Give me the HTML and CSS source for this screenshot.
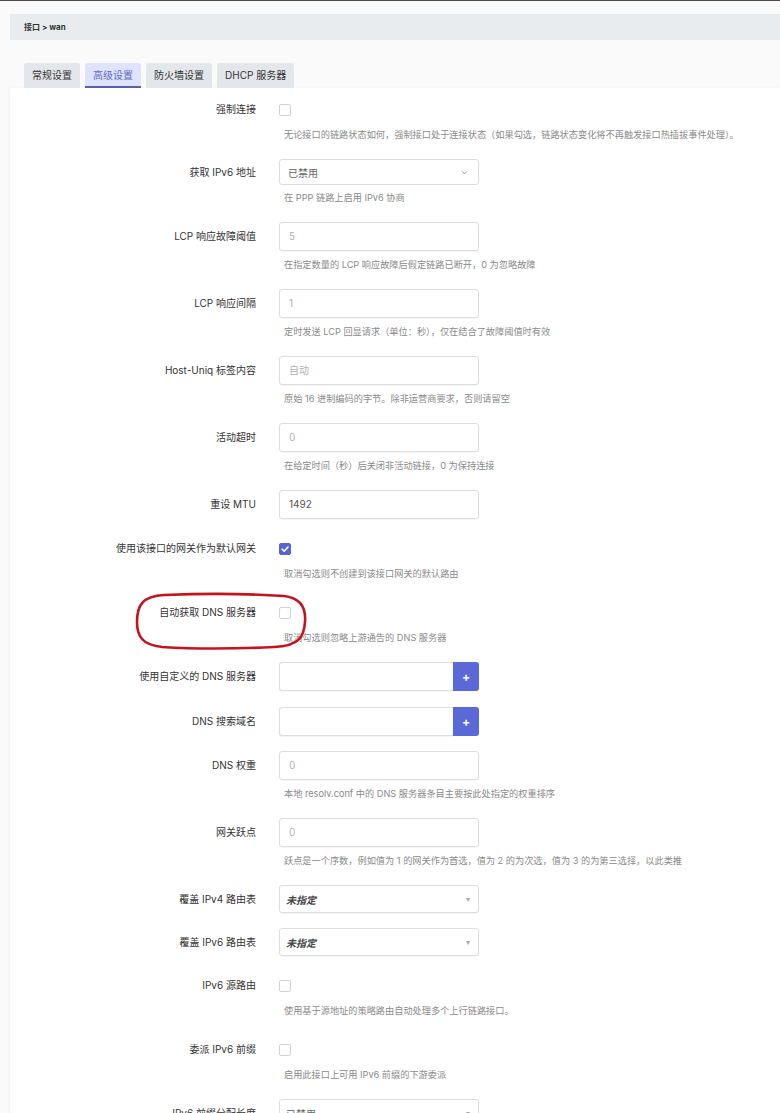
FILE: index.html
```html
<!DOCTYPE html>
<html lang="zh-CN">
<head>
<meta charset="utf-8">
<title>接口 » wan</title>
<link rel="stylesheet" href="styles.css">
</head>
<body>
<div class="topline"></div>
<div class="page">
  <div class="breadcrumb">接口 &gt; wan</div>
  <ul class="tabs">
    <li class="tab">常规设置</li>
    <li class="tab active">高级设置</li>
    <li class="tab">防火墙设置</li>
    <li class="tab">DHCP 服务器</li>
  </ul>
  <div class="card">
    <div class="row">
      <div class="lbl">强制连接</div>
      <div class="field">
        <div class="ctl"><span class="cb"></span></div>
        <div class="help cbhelp">无论接口的链路状态如何，强制接口处于连接状态（如果勾选，链路状态变化将不再触发接口热插拔事件处理）。</div>
      </div>
    </div>

    <div class="row">
      <div class="lbl sel">获取 IPv6 地址</div>
      <div class="field">
        <div class="select"><span class="val">已禁用</span>
          <svg class="chev" viewBox="0 0 8 5" width="7" height="5"><path d="M1 1l3 3 3-3" fill="none" stroke="#888" stroke-width="1"/></svg>
        </div>
        <div class="help selhelp">在 PPP 链路上启用 IPv6 协商</div>
      </div>
    </div>

    <div class="row">
      <div class="lbl">LCP 响应故障阈值</div>
      <div class="field">
        <div class="input ph">5</div>
        <div class="help">在指定数量的 LCP 响应故障后假定链路已断开，0 为忽略故障</div>
      </div>
    </div>

    <div class="row">
      <div class="lbl">LCP 响应间隔</div>
      <div class="field">
        <div class="input ph">1</div>
        <div class="help">定时发送 LCP 回显请求（单位：秒），仅在结合了故障阈值时有效</div>
      </div>
    </div>

    <div class="row">
      <div class="lbl">Host-Uniq 标签内容</div>
      <div class="field">
        <div class="input ph">自动</div>
        <div class="help">原始 16 进制编码的字节。除非运营商要求，否则请留空</div>
      </div>
    </div>

    <div class="row">
      <div class="lbl">活动超时</div>
      <div class="field">
        <div class="input ph">0</div>
        <div class="help">在给定时间（秒）后关闭非活动链接，0 为保持连接</div>
      </div>
    </div>

    <div class="row tight">
      <div class="lbl">重设 MTU</div>
      <div class="field">
        <div class="input">1492</div>
      </div>
    </div>

    <div class="row">
      <div class="lbl">使用该接口的网关作为默认网关</div>
      <div class="field">
        <div class="ctl"><span class="cb checked"><svg viewBox="0 0 12 12" width="12" height="12"><path d="M3.2 6.2l2 2 3.8-4.2" fill="none" stroke="#fff" stroke-width="1.6" stroke-linecap="round" stroke-linejoin="round"/></svg></span></div>
        <div class="help cbhelp">取消勾选则不创建到该接口网关的默认路由</div>
      </div>
    </div>

    <div class="row">
      <div class="lbl">自动获取 DNS 服务器</div>
      <div class="field">
        <div class="ctl"><span class="cb"></span></div>
        <div class="help cbhelp">取消勾选则忽略上游通告的 DNS 服务器</div>
      </div>
    </div>

    <div class="row dyn">
      <div class="lbl">使用自定义的 DNS 服务器</div>
      <div class="field">
        <div class="dynlist"><span class="dyninput"></span><span class="plus">+</span></div>
      </div>
    </div>

    <div class="row tight">
      <div class="lbl">DNS 搜索域名</div>
      <div class="field">
        <div class="dynlist"><span class="dyninput"></span><span class="plus">+</span></div>
      </div>
    </div>

    <div class="row">
      <div class="lbl">DNS 权重</div>
      <div class="field">
        <div class="input ph">0</div>
        <div class="help">本地 resolv.conf 中的 DNS 服务器条目主要按此处指定的权重排序</div>
      </div>
    </div>

    <div class="row">
      <div class="lbl">网关跃点</div>
      <div class="field">
        <div class="input ph">0</div>
        <div class="help">跃点是一个序数，例如值为 1 的网关作为首选，值为 2 的为次选，值为 3 的为第三选择，以此类推</div>
      </div>
    </div>

    <div class="row tight">
      <div class="lbl dd">覆盖 IPv4 路由表</div>
      <div class="field">
        <div class="dropdown"><em>未指定</em><span class="tri">▾</span></div>
      </div>
    </div>

    <div class="row tight">
      <div class="lbl dd">覆盖 IPv6 路由表</div>
      <div class="field">
        <div class="dropdown"><em>未指定</em><span class="tri">▾</span></div>
      </div>
    </div>

    <div class="row">
      <div class="lbl">IPv6 源路由</div>
      <div class="field">
        <div class="ctl"><span class="cb"></span></div>
        <div class="help cbhelp">使用基于源地址的策略路由自动处理多个上行链路接口。</div>
      </div>
    </div>

    <div class="row">
      <div class="lbl">委派 IPv6 前缀</div>
      <div class="field">
        <div class="ctl"><span class="cb"></span></div>
        <div class="help cbhelp">启用此接口上可用 IPv6 前缀的下游委派</div>
      </div>
    </div>

    <div class="row">
      <div class="lbl dd">IPv6 前缀分配长度</div>
      <div class="field">
        <div class="dropdown"><span class="val">已禁用</span><span class="tri">▾</span></div>
        <div class="help">向下游分配给定长度的委派前缀</div>
      </div>
    </div>
  </div>

  <svg class="annot" viewBox="0 0 174 58" width="174" height="58">
    <path d="M30 3 C 80 1, 120 2, 150 4 C 168 6, 172 18, 171 30 C 170 44, 166 54, 140 55 C 100 57, 60 57, 28 55 C 8 53, 3 44, 3 30 C 3 14, 8 4, 30 3 Z" fill="none" stroke="#c3141d" stroke-width="2.6"/>
  </svg>
</div>
</body>
</html>
```

FILE: styles.css
```css
* { box-sizing: border-box; }
html, body { margin: 0; padding: 0; }
body {
  background: #fafafb;
  font-family: Inter, "Noto Sans CJK SC", sans-serif;
  color: #333;
  overflow: hidden;
}
.topline { height: 1px; background: #4a4a4a; }
.page { position: relative; }

.breadcrumb {
  margin: 13px 0 0 10px;
  height: 26px;
  line-height: 26px;
  padding-left: 14px;
  background: #e9ecef;
  font-size: 8px;
  font-weight: 700;
  color: #333;
}

.tabs {
  list-style: none;
  margin: 23px 0 0 0;
  padding: 0 0 0 24px;
  display: flex;
  gap: 5px;
  height: 25px;
}
.tab {
  height: 25px;
  line-height: 25px;
  padding: 0 8px;
  background: #e3e6ea;
  border-radius: 3px 3px 0 0;
  font-size: 10px;
  color: #333;
}
.tab.active {
  background: #dfe3fb;
  color: #5d69c9;
  border-bottom: 2px solid #5a62a6;
  line-height: 24px;
}

.card {
  margin-left: 10px;
  background: #fff;
  padding-top: 7px;
  box-shadow: -1px 0 3px rgba(0,0,0,0.04);
  min-height: 1100px;
}

.row {
  display: grid;
  grid-template-columns: 246px 200px;
  column-gap: 23px;
  margin-bottom: 17px;
  align-items: start;
}
.row.tight { margin-bottom: 15px; }
.row.dyn { margin-bottom: 16px; }

.lbl {
  text-align: right;
  font-size: 10px;
  color: #333;
  height: 29px;
  line-height: 29px;
  white-space: nowrap;
}
.lbl.sel { height: 26px; line-height: 26px; }
.lbl.dd { height: 28px; line-height: 28px; }

.field { display: flex; flex-direction: column; }

.ctl { height: 29px; display: flex; align-items: center; }

.cb {
  width: 12px;
  height: 12px;
  border: 1px solid #cfd2d6;
  border-radius: 2px;
  background: #fff;
  display: block;
}
.cb.checked {
  background: #5865cf;
  border-color: #5865cf;
  position: relative;
}
.cb.checked svg { position: absolute; left: -1px; top: -1px; }

.help {
  margin-top: 7px;
  margin-left: 5px;
  font-size: 9.2px;
  line-height: 14px;
  color: #8a8a8a;
  white-space: nowrap;
}
.help.cbhelp { margin-top: 4px; }
.help.selhelp { margin-top: 6px; }

.input {
  height: 29px;
  border: 1px solid #dedede;
  border-radius: 3px;
  box-shadow: 0 1px 1px rgba(0,0,0,0.04);
  padding: 0 9px;
  line-height: 27px;
  font-size: 10px;
  color: #555;
  background: #fff;
}
.input.ph { color: #b0b0b0; }

.select {
  height: 26px;
  border: 1px solid #dcdcdc;
  border-radius: 3px;
  padding: 0 8px;
  display: flex;
  align-items: center;
  justify-content: space-between;
  font-size: 10px;
  color: #666;
  background: #fff;
}
.select .chev { margin-right: 2px; }

.dropdown {
  height: 28px;
  border: 1px solid #dedede;
  border-radius: 3px;
  box-shadow: 0 1px 1px rgba(0,0,0,0.04);
  padding: 0 8px 0 6px;
  display: flex;
  align-items: center;
  justify-content: space-between;
  font-size: 10px;
  color: #444;
  background: #fff;
}
.dropdown em { font-style: italic; font-weight: 700; color: #444; }
.dropdown .val { color: #666; }
.dropdown .tri { color: #aaa; font-size: 8px; }

.dynlist {
  height: 29px;
  display: flex;
}
.dyninput {
  flex: 1;
  border: 1px solid #dedede;
  border-right: none;
  border-radius: 3px 0 0 3px;
  box-shadow: 0 1px 1px rgba(0,0,0,0.04);
  background: #fff;
}
.plus {
  width: 26px;
  background: #5b69d8;
  color: #fff;
  border-radius: 0 3px 3px 0;
  display: flex;
  align-items: center;
  justify-content: center;
  font-size: 12px;
  font-weight: 700;
}

.annot {
  position: absolute;
  left: 134px;
  top: 578px;
}
```
